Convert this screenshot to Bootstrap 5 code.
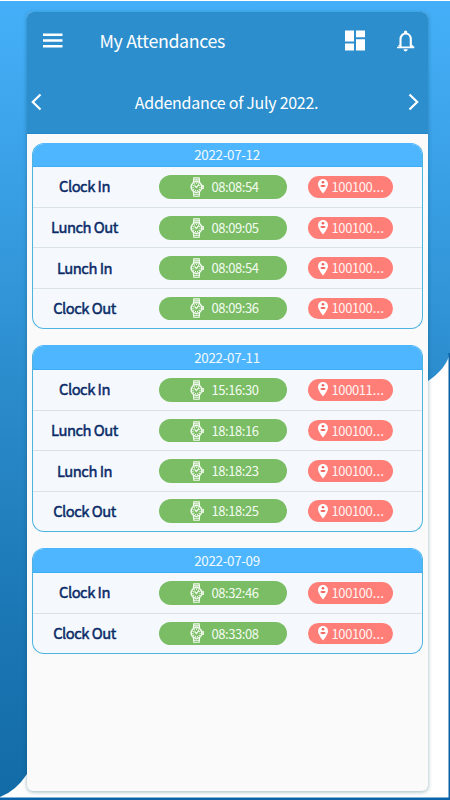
<!DOCTYPE html>
<html lang="en">
<head>
<meta charset="utf-8">
<meta name="viewport" content="width=device-width, initial-scale=1">
<title>My Attendances</title>
<link rel="stylesheet" href="https://cdn.jsdelivr.net/npm/bootstrap@5.3.0/dist/css/bootstrap.min.css">
<style>
body{width:450px;height:800px;font-family:"Noto Sans CJK SC","Noto Sans CJK JP",sans-serif;background:#fff;line-height:1}
.backdrop{z-index:-1}
.stage{height:800px;padding:12px 22px 9px 27px}
.phone{background:#fafafa;border-radius:6px;box-shadow:0 1px 4px rgba(0,70,90,.4)}
.top-area{background:#2c8ecd;height:121.5px;color:#fff;border-bottom:1px solid #2687c8}
.app-bar{height:57px;padding:0 7px 0 15px}
.app-title{font-size:17.8px;letter-spacing:-.35px;margin-left:36.5px}
.month-bar{height:64px;padding:2px 9px 0 3px}
.month-name{font-size:16px;letter-spacing:-.29px;padding-left:4px}
.days{padding:9px 5.5px 0 4.5px;gap:16.8px}
.day{border:1px solid #4fb3e0;border-radius:12px;background:#f5f9fe;border-top-color:#4eb6ff}
.day-date{height:23.2px;background:#4eb6ff;color:#f1faff;font-size:13.4px;letter-spacing:-.3px;border-bottom:1px solid #3eadf5}
.entry{height:40.4px}
.entry:last-child{height:39.8px}
.entry + .entry{border-top:1px solid #d9e1e9}
.entry-label{width:104px;color:#0a2a66;font-size:14.8px;letter-spacing:-.5px;-webkit-text-stroke:.45px #0a2a66}
.time-pill{width:127.5px;height:23.5px;margin-left:22.5px;background:#7abd65;color:#f4fbf1;font-size:13px;letter-spacing:-.45px;padding-left:31px}
.place-pill{width:85px;height:21.5px;margin-left:21.5px;background:#ff7f78;color:#fff3f2;font-size:13px;letter-spacing:-.4px;padding-left:9.5px}
.pill-text{padding-bottom:.6px}
.watch-icon{margin-right:7.5px}
.ellipsis{font-family:"Open Sans",sans-serif;font-size:15px;line-height:0;letter-spacing:0}
</style>
<script src="https://cdn.jsdelivr.net/npm/bootstrap@5.3.0/dist/js/bootstrap.bundle.min.js"></script>
</head>
<body class="overflow-hidden position-relative">
<svg class="backdrop position-absolute top-0 start-0" width="450" height="800" viewBox="0 0 450 800">
  <defs><linearGradient id="sky" gradientUnits="userSpaceOnUse" x1="0" y1="0" x2="0" y2="800">
    <stop offset="0" stop-color="#44aff8"/><stop offset=".2" stop-color="#3ba2e8"/><stop offset=".48" stop-color="#2b8ccc"/><stop offset=".8" stop-color="#1a75b2"/><stop offset="1" stop-color="#126ba6"/>
  </linearGradient></defs>
  <path fill="url(#sky)" d="M0 1H450V353Q446 369 428 381L27 774Q16 791 0 797Z"/>
  <path fill="#0a63a8" d="M448.5 353H450V800H0V797.5H448.5Z"/>
</svg>
<svg class="d-none">
  <symbol id="watch" viewBox="0 0 14 20"><g fill="none" stroke="#f4fbf1" stroke-width="1.15">
    <path d="M3.4 5L3.8 .8H9.2L9.6 5M3.4 15L3.8 19.2H9.2L9.6 15M3.8 2.8H9.2M3.8 17.2H9.2"/><circle cx="6.5" cy="10" r="5.4" stroke-width="1.5"/><circle cx="6.5" cy="10" r="3.6" stroke-dasharray="1 1" stroke-width="1.2"/><path stroke-width="1.3" d="M4.6 8.4L6.3 10.6L9 7.5M12.2 8.6H13.2V11.4H12.2"/></g></symbol>
  <symbol id="pin" viewBox="0 0 10 15"><path fill="#fff" d="M5 0A5 5 0 0 0 0 5C0 8.6 5 14.6 5 14.6S10 8.6 10 5A5 5 0 0 0 5 0Z"/><circle cx="5" cy="3.2" r="1.3" fill="#f0625c"/><path fill="#f0625c" d="M2.3 6.9C2.3 5.6 7.7 5.6 7.7 6.9C6.8 8.3 3.2 8.3 2.3 6.9Z"/></symbol>
</svg>

<div class="stage">
  <main class="phone h-100 overflow-hidden">
    <header class="top-area">
      <nav class="app-bar d-flex align-items-center">
        <svg width="21" height="16" viewBox="0 0 21 16"><path stroke="#fff" stroke-width="2.4" d="M1 1.7H20.5M1 7.5H20.5M1 13.3H20.5"/></svg>
        <h1 class="app-title fw-normal mb-0">My Attendances</h1>
        <svg class="ms-auto" width="20" height="21" viewBox="0 0 20 21" fill="#fff"><path d="M0 .5H9V11.5H0ZM11 .5H20V7.3H11ZM0 13.5H9V20.5H0ZM11 9.3H20V20.5H11Z"/></svg>
        <svg class="ms-4" width="32" height="22" viewBox="-1 0 32 22"><path fill="none" stroke="#fff" stroke-width="2.1" d="M10.5 17.3V9.5C10.5 1.5 20.8 1.5 20.8 9.5V17.3"/><path fill="#fff" d="M7 16.4H24.3V18.2H7ZM9.5 14.5L7 17H11ZM21.8 14.5L24.3 17H20.5ZM14 3V2Q14 .5 15.6 .5T17.2 2V3ZM13.4 19.3H17.8Q17.4 21.4 15.6 21.4T13.4 19.3Z"/></svg>
      </nav>
      <div class="month-bar d-flex align-items-center justify-content-between">
        <svg width="12" height="18" viewBox="0 0 12 18"><path fill="none" stroke="#fff" stroke-width="2.2" d="M10.5 1.5L2.8 9L10.5 16.5"/></svg>
        <span class="month-name">Addendance of July 2022.</span>
        <svg width="12" height="18" viewBox="0 0 12 18"><path fill="none" stroke="#fff" stroke-width="2.2" d="M2.5 1.5L10.2 9L2.5 16.5"/></svg>
      </div>
    </header>
    <div class="days d-flex flex-column" id="days"></div>
  </main>
</div>

<script>
const records = [
  ['2022-07-12', [['Clock In','08:08:54','100100'],['Lunch Out','08:09:05','100100'],['Lunch In','08:08:54','100100'],['Clock Out','08:09:36','100100']]],
  ['2022-07-11', [['Clock In','15:16:30','100011'],['Lunch Out','18:18:16','100100'],['Lunch In','18:18:23','100100'],['Clock Out','18:18:25','100100']]],
  ['2022-07-09', [['Clock In','08:32:46','100100'],['Clock Out','08:33:08','100100']]]
];
document.getElementById('days').innerHTML = records.map(([date, entries]) => `
  <section class="day overflow-hidden">
    <div class="day-date d-flex align-items-center justify-content-center">${date}</div>
    ${entries.map(([label, time, place]) => `
    <div class="entry d-flex align-items-center">
      <div class="entry-label text-center">${label}</div>
      <div class="time-pill rounded-pill d-flex align-items-center"><svg class="watch-icon" width="14" height="20"><use href="#watch"/></svg><span class="pill-text">${time}</span></div>
      <div class="place-pill rounded-pill d-flex align-items-center"><svg class="me-1" width="10" height="15"><use href="#pin"/></svg><span class="pill-text">${place}<span class="ellipsis">…</span></span></div>
    </div>`).join('')}
  </section>`).join('');
</script>
</body>
</html>
